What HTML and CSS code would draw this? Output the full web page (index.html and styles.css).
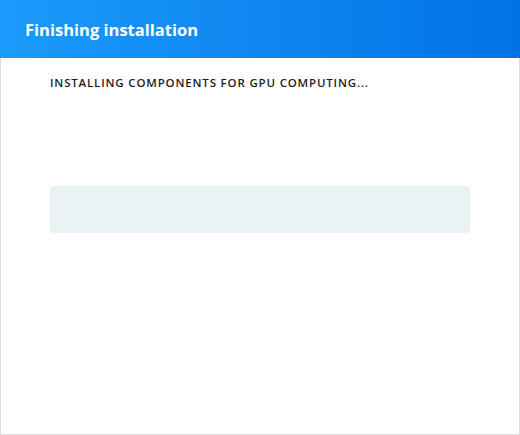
FILE: index.html
```html
<!DOCTYPE html>
<html lang="en">
<head>
    <meta charset="UTF-8">
    <meta name="viewport" content="width=device-width, initial-scale=1.0">
    <title>Finishing installation</title>
    <link rel="stylesheet" href="styles.css">
</head>
<body>
    <div id="dialog">
        <div class="header">
            <h2>Finishing installation</h2>
        </div>
        <div class="content">
            <p class="status">INSTALLING COMPONENTS FOR GPU COMPUTING...</p>
            <div class="progress">
                <div class="progress-bar" style="width: 0%;"></div>
            </div>
        </div>
    </div>
</body>
</html>
```

FILE: styles.css
```css
* { box-sizing: border-box; }
body { margin: 0; font-family: "Open Sans", "Noto Sans", sans-serif; background: white;}
#dialog { width: 520px; height: 435px; display: flex; flex-direction: column;}
.header {
    height: 58px; padding-left: 25px;
    display: flex; align-items: center;
    background: linear-gradient(to right, #1b9bfb, #0272e5);
}
.header h2 { margin: 0; color: white; font-size: 16.5px; font-weight: 700; letter-spacing: 0;}
.content {
    flex: 1; padding: 16px 49px 0 49px;
    border: 1px solid #dcdcdc; border-top: none;
}
.status { margin: 0; font-size: 11.5px; font-weight: 600; color: #1c1c1c; letter-spacing: 0.82px; line-height: 18px;}
.progress { margin-top: 94px; height: 47px; background-color: #ebf2f6; border-radius: 3px;}
.progress-bar { height: 100%; background-color: #0a84f0; border-radius: 3px;}
```
